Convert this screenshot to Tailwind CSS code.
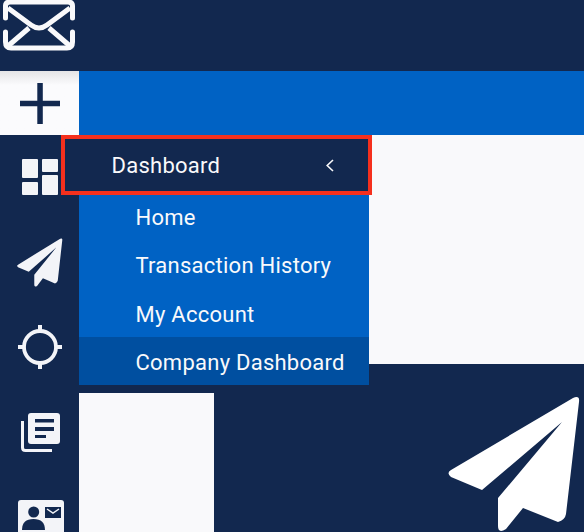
<!DOCTYPE html>
<html lang="en">
  <head>
    <meta charset="UTF-8" />
    <meta name="viewport" content="width=device-width, initial-scale=1.0" />
    <title>Dashboard</title>
    <script src="https://cdn.jsdelivr.net/npm/@tailwindcss/browser@4"></script>
  </head>
  <body class="bg-[#12284f] font-['Roboto',sans-serif] overflow-hidden">
    <div class="relative w-[584px] h-[532px] overflow-hidden flex">
      <!-- sidebar -->
      <div class="w-[79px] shrink-0 flex flex-col items-center">
        <div class="h-[71px] w-[79px] shrink-0">
          <svg class="block ml-[1px]" width="76" height="51" viewBox="0 0 76 51" fill="none" stroke="#f9f9fb" stroke-width="5">
            <path d="M4.500 18V6Q4.500 2 9 2H67Q71.500 2 71.500 6V18M4.500 32V42Q4.500 48 10 48H66Q71.500 48 71.500 42V32" stroke-linecap="round" />
            <path d="M7 8L30 25Q38 31 46 25L69 8M7 46L28 28M69 46L48 28" />
          </svg>
        </div>
        <div class="h-[64px] w-[79px] shrink-0 bg-gradient-to-b from-[#e4e4e6] to-[#fbfbfd] to-[22%] flex items-center justify-center">
          <svg width="40" height="41" viewBox="0 0 40 41"><path d="M17.300 0h5.500v17.700H40v5.500H22.800V41h-5.500V23.200H0v-5.500h17.300z" fill="#12284f" /></svg>
        </div>
        <div class="pt-[24px] shrink-0 ml-[1px]">
          <svg class="block" width="36" height="36" viewBox="0 0 36 36" fill="#f3f4f8">
            <rect x="0" y="0" width="16" height="19" rx="1" /><rect x="20" y="0" width="16" height="13" rx="1" /><rect x="0" y="23" width="16" height="13" rx="1" /><rect x="20" y="16" width="16" height="20" rx="1" />
          </svg>
        </div>
        <div class="pt-[43px] shrink-0 ml-[2px]">
          <svg class="block" width="47" height="49" viewBox="0 0 136 136" fill="#f3f4f8" preserveAspectRatio="none">
            <path d="M125 2Q132-1 131 6L118 118Q117 124 110 126L75 112L58 133Q50 138 50 130V102L114 26L34 94L3 81Q-2 77 3 74Z" />
          </svg>
        </div>
        <div class="pt-[38px] shrink-0 ml-[1px]">
          <svg class="block" width="44" height="44" viewBox="0 0 44 44" fill="none" stroke="#f3f4f8" stroke-width="3.800">
            <circle cx="22" cy="22" r="16" />
            <path d="M22 0v7M22 37v7M0 22h7M37 22h7" stroke-width="4" />
          </svg>
        </div>
        <div class="pt-[44px] shrink-0 ml-[2px]">
          <svg class="block" width="39" height="39" viewBox="0 0 39 39">
            <path d="M1.500 8V34.500Q1.500 37.500 4.500 37.500H31" fill="none" stroke="#f3f4f8" stroke-width="3" />
            <rect x="7" y="0" width="32" height="31" rx="3" fill="#f3f4f8" />
            <path d="M14 6h19v3.500H14zM14 14h19v4H14zM14 22h11v3H14z" fill="#12284f" />
          </svg>
        </div>
        <div class="pt-[48px] shrink-0 ml-[2px]">
          <svg class="block" width="46" height="46" viewBox="0 0 46 46">
            <rect x="0" y="0" width="46" height="46" rx="3" fill="#f3f4f8" />
            <circle cx="15.700" cy="12" r="5.500" fill="#12284f" />
            <path d="M4 30q0-11 11.500-11t11.500 11z" fill="#12284f" />
            <rect x="27" y="7" width="16" height="11" fill="#12284f" />
            <path d="M29 9l6 4 6-4" fill="none" stroke="#f3f4f8" stroke-width="1.500" />
          </svg>
        </div>
      </div>

      <!-- main -->
      <div class="flex-1 relative">
        <div class="h-[71px]"></div>
        <div class="h-[64px] bg-[#0062c4]"></div>
        <div class="h-[229px] bg-[#f9f9fb]"></div>
        <div class="h-[29px]"></div>
        <div class="w-[135px] h-[139px] bg-[#f9f9fb]"></div>
        <svg class="absolute left-[369px] top-[396px]" width="136" height="136" viewBox="0 0 136 136" fill="#fff">
          <path d="M125 2Q132-1 131 6L118 118Q117 124 110 126L75 112L58 133Q50 138 50 130V102L114 26L34 94L3 81Q-2 77 3 74Z" />
        </svg>
      </div>

      <!-- dashboard menu -->
      <div class="absolute left-[79px] top-[135px] w-[290px] text-[#f9f9fb] text-[22px] tracking-[0.25px]">
        <div class="h-[60px]"></div>
        <div class="bg-[#0062c4] pl-[56.500px]">
          <div class="h-[45px] leading-[45px]">Home</div>
          <div class="h-[48px] leading-[52px]">Transaction History</div>
          <div class="h-[49px] leading-[53px]">My Account</div>
        </div>
        <div class="bg-[#004fa0] pl-[56.500px] h-[48px] leading-[52px]">Company Dashboard</div>
      </div>
      <div class="absolute left-[61px] top-[135px] w-[311px] h-[60px] bg-[#12284f] border-[4px] border-[#f5301d] flex items-center justify-between pl-[46.500px] pr-[34px] text-[#f9f9fb] text-[22px] tracking-[0.25px]">
        <span>Dashboard</span>
        <svg width="8" height="13" viewBox="0 0 8 13" fill="none" stroke="#f9f9fb" stroke-width="1.600"><path d="M7 1L1.200 6.500L7 12" /></svg>
      </div>
    </div>
  </body>
</html>
